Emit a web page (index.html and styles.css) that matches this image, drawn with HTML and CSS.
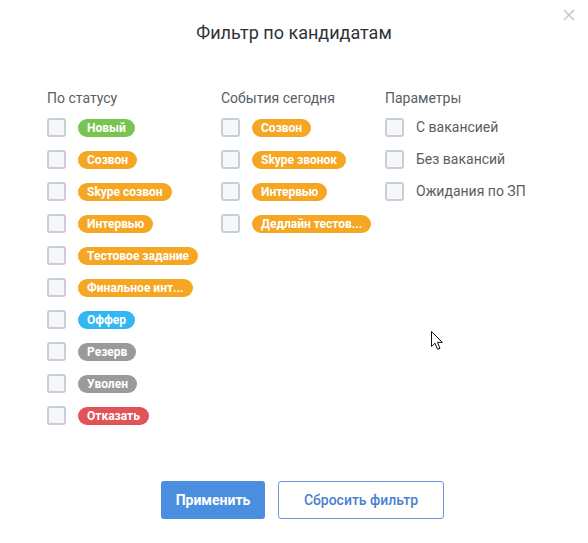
FILE: index.html
```html
<!DOCTYPE html>
<html lang="ru">
<head>
<meta charset="utf-8">
<title>Фильтр по кандидатам</title>
<link rel="stylesheet" href="styles.css">
</head>
<body>
<div class="modal">
  <button class="close" aria-label="Закрыть">
    <svg width="12" height="12" viewBox="0 0 12 12"><path d="M1 1L11 11M11 1L1 11" stroke="#c6cad1" stroke-width="1.7" fill="none"/></svg>
  </button>
  <h1 class="title">Фильтр по кандидатам</h1>
  <div class="columns">
    <div class="col col-status">
      <div class="col-head">По статусу</div>
      <ul class="list">
        <li class="row"><span class="cb"></span><span class="pill green">Новый</span></li>
        <li class="row"><span class="cb"></span><span class="pill orange">Созвон</span></li>
        <li class="row"><span class="cb"></span><span class="pill orange">Skype созвон</span></li>
        <li class="row"><span class="cb"></span><span class="pill orange">Интервью</span></li>
        <li class="row"><span class="cb"></span><span class="pill orange">Тестовое задание</span></li>
        <li class="row"><span class="cb"></span><span class="pill orange">Финальное инт...</span></li>
        <li class="row"><span class="cb"></span><span class="pill blue">Оффер</span></li>
        <li class="row"><span class="cb"></span><span class="pill grey">Резерв</span></li>
        <li class="row"><span class="cb"></span><span class="pill grey">Уволен</span></li>
        <li class="row"><span class="cb"></span><span class="pill red">Отказать</span></li>
      </ul>
    </div>
    <div class="col col-events">
      <div class="col-head">События сегодня</div>
      <ul class="list">
        <li class="row"><span class="cb"></span><span class="pill orange">Созвон</span></li>
        <li class="row"><span class="cb"></span><span class="pill orange">Skype звонок</span></li>
        <li class="row"><span class="cb"></span><span class="pill orange">Интервью</span></li>
        <li class="row"><span class="cb"></span><span class="pill orange">Дедлайн тестов...</span></li>
      </ul>
    </div>
    <div class="col col-params">
      <div class="col-head">Параметры</div>
      <ul class="list">
        <li class="row"><span class="cb"></span><span class="label">С вакансией</span></li>
        <li class="row"><span class="cb"></span><span class="label">Без вакансий</span></li>
        <li class="row"><span class="cb"></span><span class="label">Ожидания по ЗП</span></li>
      </ul>
    </div>
  </div>
  <div class="actions">
    <button class="btn btn-primary">Применить</button>
    <button class="btn btn-outline">Сбросить фильтр</button>
  </div>
  <svg class="cursor" width="13" height="20" viewBox="0 0 13 20"><path d="M0.5 0.5V15.5L4 12.2L6.6 18.3L9 17.3L6.5 11.4H11.3Z" fill="#fff" stroke="#111" stroke-width="1" stroke-linejoin="round"/></svg>
</div>
</body>
</html>
```

FILE: styles.css
```css
* { box-sizing: border-box; }
html, body { margin: 0; padding: 0; background: #fff; }
body {
  font-family: Roboto, "Open Sans", sans-serif;
  color: #4d5057;
  width: 588px;
  height: 543px;
  overflow: hidden;
}
.modal {
  position: relative;
  width: 588px;
  height: 543px;
  padding: 22px 0 0 47px;
}
.close {
  position: absolute;
  top: 9px;
  right: 13px;
  border: 0;
  background: none;
  padding: 0;
  width: 12px;
  height: 12px;
  display: block;
}
.close svg { display: block; }
.title {
  margin: 0 0 0 -47px;
  text-align: center;
  font-size: 18px;
  font-weight: 400;
  line-height: 22px;
  color: #2f3238;
}
.columns {
  display: flex;
  margin-top: 44px;
}
.col-status { width: 174px; }
.col-events { width: 164px; }
.col-params { flex: 1; }
.col-head {
  font-size: 14px;
  line-height: 20px;
  color: #5a5d63;
  height: 20px;
}
.list {
  list-style: none;
  margin: 3px 0 0;
  padding: 0;
}
.row {
  display: flex;
  align-items: center;
  gap: 12px;
  height: 32px;
}
.cb {
  width: 19px;
  height: 19px;
  border: 2px solid #c9cdd6;
  border-radius: 3px;
  background: #f6f7f9;
  flex: none;
}
.pill {
  display: inline-block;
  height: 18px;
  line-height: 18px;
  padding: 0 9px;
  border-radius: 9px;
  color: #fff;
  font-size: 12px;
  font-weight: 700;
  white-space: nowrap;
  margin-top: 2px;
}
.green { background: #79c450; }
.orange { background: #f5a623; }
.blue { background: #33b7f2; }
.grey { background: #9a9a9a; }
.red { background: #e15358; }
.label {
  font-size: 14px;
  color: #5a5d63;
}
.actions {
  display: flex;
  gap: 13px;
  margin: 50px 0 0 114px;
}
.btn {
  height: 38px;
  border-radius: 3px;
  font-family: inherit;
  font-size: 14px;
  font-weight: 700;
  padding: 0;
}
.btn-primary {
  width: 104px;
  background: #4a8ee0;
  color: #fff;
  border: 0;
}
.btn-outline {
  width: 166px;
  background: #fff;
  color: #4a80d2;
  border: 1px solid #6a98db;
  font-weight: 500;
}
.cursor {
  position: absolute;
  left: 431px;
  top: 331px;
}
```
